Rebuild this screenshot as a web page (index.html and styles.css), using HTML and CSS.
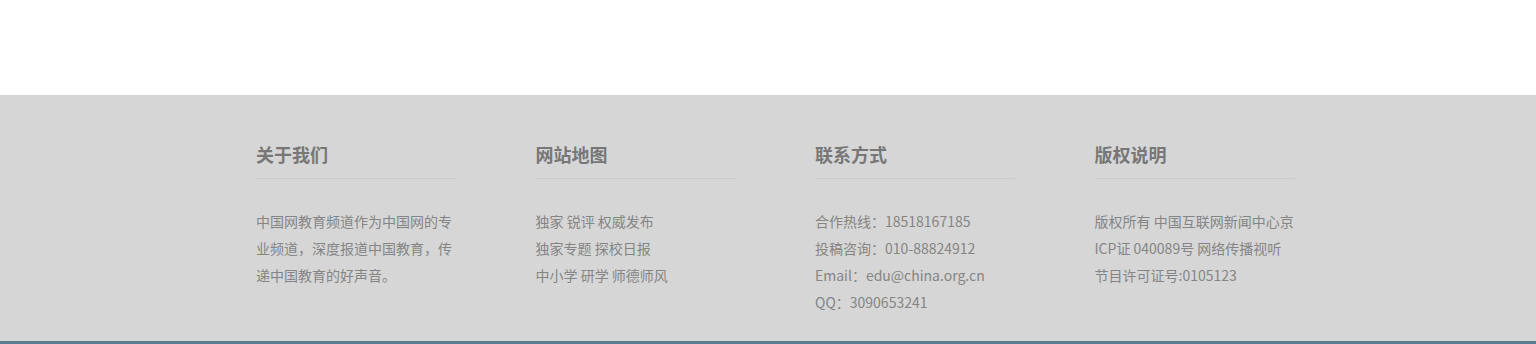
FILE: index.html
```html
<!DOCTYPE html>
<html lang="zh-CN">
<head>
    <meta charset="UTF-8">
    <meta name="viewport" content="width=device-width, initial-scale=1.0">
    <title>中国网教育频道</title>
    <link rel="stylesheet" href="styles.css">
</head>
<body>
    <div class="page-top"></div>

    <footer class="footer">
        <div class="footer-inner">
            <div class="footer-col">
                <h3>关于我们</h3>
                <p>中国网教育频道作为中国网的专业频道，深度报道中国教育，传递中国教育的好声音。</p>
            </div>
            <div class="footer-col">
                <h3>网站地图</h3>
                <ul>
                    <li><a href="#">独家</a> <a href="#">锐评</a> <a href="#">权威发布</a></li>
                    <li><a href="#">独家专题</a> <a href="#">探校日报</a></li>
                    <li><a href="#">中小学</a> <a href="#">研学</a> <a href="#">师德师风</a></li>
                </ul>
            </div>
            <div class="footer-col">
                <h3>联系方式</h3>
                <ul>
                    <li>合作热线：18518167185</li>
                    <li>投稿咨询：010-88824912</li>
                    <li>Email：edu@china.org.cn</li>
                    <li>QQ：3090653241</li>
                </ul>
            </div>
            <div class="footer-col">
                <h3>版权说明</h3>
                <p>版权所有 中国互联网新闻中心京ICP证 040089号 网络传播视听节目许可证号:0105123</p>
            </div>
        </div>
    </footer>
    <div class="footer-bar"></div>
</body>
</html>
```

FILE: styles.css
```css
:root {
    --footer-bg: #d6d6d6;
    --title-color: #777;
    --text-color: #858585;
    --line-color: #cbcbcb;
    --bar-color: #5a7d92;
}
body {
    margin: 0;
    padding: 0;
    font-family: "Noto Sans CJK SC", "Noto Sans", sans-serif;
    background: #fff;
}
.page-top {
    height: 95px;
}

/* Footer */
.footer {
    background-color: var(--footer-bg);
    padding: 47px 0 25px;
}
.footer-inner {
    width: 1118px;
    margin: 0 auto;
    display: grid;
    grid-template-columns: repeat(4, 1fr);
}
.footer-col {
    padding-left: 47px;
}
.footer-col h3 {
    width: 200px;
    margin: 0 0 29px;
    padding-bottom: 12px;
    font-size: 18px;
    line-height: 24px;
    font-weight: 700;
    color: var(--title-color);
    border-bottom: 1px solid var(--line-color);
}
.footer-col p,
.footer-col ul {
    width: 200px;
    margin: 0;
    padding: 0;
    font-size: 14px;
    line-height: 27px;
    color: var(--text-color);
    list-style: none;
}
.footer-col a {
    color: var(--text-color);
    text-decoration: none;
}
.footer-bar {
    height: 40px;
    background-color: var(--bar-color);
}
```
